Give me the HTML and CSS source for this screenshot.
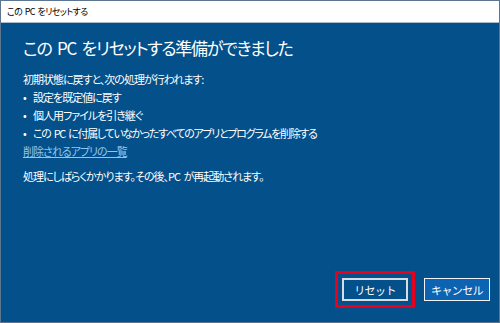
FILE: index.html
```html
<!DOCTYPE html>
<html lang="ja">
<head>
    <meta charset="UTF-8">
    <meta name="viewport" content="width=device-width, initial-scale=1.0">
    <title>この PC をリセットする</title>
    <link rel="stylesheet" href="styles.css">
</head>
<body>
    <div class="window">
        <div class="titlebar">この PC をリセットする</div>
        <div class="content">
            <h1>この PC をリセットする準備ができました</h1>
            <p class="intro">初期状態に戻すと、次の処理が行われます:</p>
            <ul class="changes">
                <li>設定を既定値に戻す</li>
                <li>個人用ファイルを引き継ぐ</li>
                <li>この PC に付属していなかったすべてのアプリとプログラムを削除する</li>
            </ul>
            <a class="app-link" href="#">削除されるアプリの一覧</a>
            <p class="note">処理にしばらくかかります。その後、PC が再起動されます。</p>
            <div class="actions">
                <span class="highlight">
                    <button class="btn btn-reset">リセット</button>
                </span>
                <button class="btn btn-cancel">キャンセル</button>
            </div>
        </div>
    </div>
</body>
</html>
```

FILE: styles.css
```css
/* General Styles */
html, body {
    margin: 0;
    padding: 0;
}

body {
    font-family: "Noto Sans CJK JP", "Noto Sans", sans-serif;
    font-feature-settings: "palt" 1;
    width: 500px;
    height: 323px;
    overflow: hidden;
}

.window {
    box-sizing: border-box;
    width: 500px;
    height: 323px;
    border: 1px solid #5c7590;
    display: flex;
    flex-direction: column;
}

.titlebar {
    height: 21px;
    line-height: 21px;
    padding-left: 6px;
    font-size: 9px;
    letter-spacing: -0.6px;
    word-spacing: 1px;
    color: #000;
    background: #fff;
    border-bottom: 1px solid #a9bccd;
}

.content {
    flex: 1;
    background-color: #03508b;
    color: #fff;
    padding: 12px 9px 0 22px;
    display: flex;
    flex-direction: column;
    font-size: 11px;
    letter-spacing: -1px;
    word-spacing: 2px;
}

.content h1 {
    margin: 0;
    font-size: 17px;
    font-weight: 400;
    line-height: 26px;
    letter-spacing: -1.3px;
    word-spacing: 3px;
}

.intro {
    margin: 9px 0 0;
    line-height: 18px;
}

.changes {
    list-style: none;
    margin: 0;
    padding: 0;
    line-height: 18px;
}

.changes li::before {
    content: "•";
    display: inline-block;
    width: 10px;
}

.changes li:last-child {
    letter-spacing: -1.3px;
}

.app-link {
    align-self: flex-start;
    line-height: 18px;
    color: #8fc6f0;
}

.note {
    margin: 7px 0 0;
    line-height: 18px;
}

.actions {
    margin-top: auto;
    margin-bottom: 14px;
    display: flex;
    justify-content: flex-end;
    align-items: center;
    gap: 9px;
}

.highlight {
    display: flex;
    padding: 4px;
    border: 3px solid #e8001c;
}

.btn {
    box-sizing: border-box;
    width: 66px;
    height: 23px;
    padding: 0;
    font-family: inherit;
    font-size: 11px;
    letter-spacing: -0.6px;
    white-space: nowrap;
    color: #fff;
    cursor: pointer;
}

.btn-reset {
    background-color: #03508b;
    border: 2px solid #d8dde4;
}

.btn-cancel {
    background-color: #0c63b2;
    border: 1px solid #f0f4f8;
}
```
